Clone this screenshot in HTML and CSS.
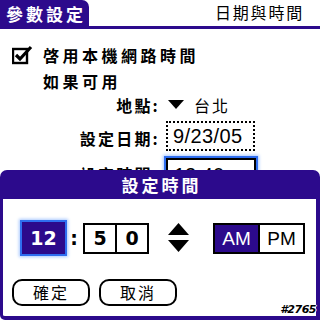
FILE: index.html
```html
<!DOCTYPE html>
<html>
<head>
<meta charset="utf-8">
<link rel="stylesheet" href="styles.css">
</head>
<body>
<div class="screen">
  <div class="titlebar">
    <div class="tab">參數設定</div>
    <div class="title-right">日期與時間</div>
  </div>
  <div class="content">
    <div class="check-row">
      <svg class="checkbox" width="21" height="20" viewBox="0 0 21 20">
        <rect x="1" y="4" width="14" height="14" fill="none" stroke="#000" stroke-width="2.4"/>
        <path d="M4 10 L8 14 L19 2" fill="none" stroke="#000" stroke-width="3.2"/>
      </svg>
      <span class="bold-label">啓用本機網路時間</span>
    </div>
    <div class="sub-label">如果可用</div>
    <div class="form">
      <div class="frow loc-row">
        <div class="flabel">地點:</div>
        <div class="fvalue loc">
          <svg width="17" height="10" viewBox="0 0 17 10"><path d="M0 0 H16 L8 9 Z" fill="#000"/></svg>
          <span class="city">台北</span>
        </div>
      </div>
      <div class="frow date-row">
        <div class="flabel">設定日期:</div>
        <div class="fvalue"><div class="datebox">9/23/05</div></div>
      </div>
      <div class="frow time-row-main">
        <div class="flabel">設定時間:</div>
        <div class="fvalue"><div class="timebox">12:40</div></div>
      </div>
    </div>
  </div>

  <div class="dialog">
    <div class="dhead">設定時間</div>
    <div class="dbody">
      <div class="time-row">
        <div class="hour">12</div>
        <div class="colon">:</div>
        <div class="minutes"><div class="mcell">5</div><div class="mcell">0</div></div>
        <svg class="arrows" width="21" height="30" viewBox="0 0 21 30">
          <path d="M10.5 0 L21 12 H0 Z" fill="#000"/>
          <path d="M0 17 H21 L10.5 29 Z" fill="#000"/>
        </svg>
        <div class="ampm"><div class="am">AM</div><div class="pm">PM</div></div>
      </div>
      <div class="btn-row">
        <div class="btn">確定</div>
        <div class="btn">取消</div>
      </div>
    </div>
    <div class="serial">#2765</div>
  </div>
</div>
</body>
</html>
```
FILE: styles.css
```css
html, body {
  margin: 0;
  padding: 0;
  background: #fff;
}
body {
  width: 320px;
  height: 320px;
  overflow: hidden;
  font-family: "Noto Sans CJK TC", "Noto Sans", sans-serif;
  color: #000;
}
.screen {
  position: relative;
  width: 320px;
  height: 320px;
}
.titlebar {
  display: flex;
  justify-content: space-between;
  align-items: flex-end;
  height: 26px;
  border-bottom: 3px solid #2c0a8c;
}
.tab {
  width: 83px;
  height: 26px;
  padding-left: 6px;
  background: #2c0a8c;
  color: #fff;
  border-top-right-radius: 7px;
  font-size: 17px;
  font-weight: bold;
  letter-spacing: 3px;
  line-height: 27px;
}
.title-right {
  font-size: 16px;
  letter-spacing: 1.8px;
  line-height: 16px;
  margin-right: 16px;
  margin-bottom: 6px;
}
.content {
  padding-top: 16px;
}
.check-row {
  display: flex;
  align-items: center;
  padding-left: 12px;
  gap: 10px;
  height: 20px;
}
.bold-label, .sub-label, .flabel {
  font-size: 16px;
  font-weight: bold;
  letter-spacing: 3.5px;
  line-height: 18px;
}
.sub-label {
  margin-top: 7px;
  padding-left: 43px;
}
.form {
  display: flex;
  flex-direction: column;
  margin-top: 4px;
}
.frow {
  display: flex;
  column-gap: 8px;
}
.flabel {
  width: 160px;
  text-align: right;
  letter-spacing: 2.2px;
  margin-right: -2px;
  flex: none;
}
.fvalue {
  display: flex;
  align-items: center;
}
.loc-row {
  height: 22px;
  align-items: center;
}
.loc {
  gap: 9px;
  padding-left: 2px;
}
.city {
  font-size: 16px;
  letter-spacing: 2px;
}
.date-row {
  height: 40px;
  align-items: flex-start;
}
.date-row .flabel {
  margin-top: 13px;
}
.date-row .fvalue {
  margin-top: 5px;
}
.datebox {
  width: 80px;
  height: 26px;
  border: 2px dotted #000;
  font-family: "Liberation Sans", sans-serif;
  font-size: 20px;
  line-height: 27px;
  padding-left: 5px;
  letter-spacing: 0.4px;
}
.time-row-main {
  align-items: flex-start;
}
.time-row-main .flabel {
  margin-top: 9px;
}
.time-row-main .fvalue {
  margin-top: 2px;
}
.timebox {
  width: 80px;
  height: 26px;
  border: 2px solid #000;
  box-shadow: 0 0 0 2px #2f6ef0, 0 0 3px 3px #a8c8ff;
  font-family: "Liberation Sans", sans-serif;
  font-size: 20px;
  line-height: 30px;
  padding-left: 6px;
}
.dialog {
  position: absolute;
  left: 0;
  top: 170px;
  width: 320px;
  height: 150px;
  display: flex;
  flex-direction: column;
}
.dhead {
  height: 29px;
  background: #2c0a8c;
  color: #fff;
  border-radius: 7px 7px 0 0;
  text-align: center;
  font-size: 17px;
  font-weight: bold;
  letter-spacing: 3px;
  text-indent: 3px;
  line-height: 30px;
}
.dbody {
  flex: 1;
  background: #fff;
  border: solid #2c0a8c;
  border-width: 0 4px 4px 3px;
  border-bottom-left-radius: 5px;
  padding: 23px 0 0 19px;
}
.time-row {
  display: flex;
  align-items: center;
  height: 32px;
}
.hour {
  width: 43px;
  height: 32px;
  background: #2c0a8c;
  color: #fff;
  font-family: "DejaVu Sans", sans-serif;
  font-weight: bold;
  font-size: 19px;
  line-height: 32px;
  text-align: center;
  box-shadow: 0 0 0 2px #2f6ef0, 0 0 3px 3px #a8c8ff;
}
.colon {
  width: 18px;
  text-align: center;
  font-family: "DejaVu Sans", sans-serif;
  font-weight: bold;
  font-size: 19px;
  line-height: 32px;
}
.minutes {
  display: flex;
  border: 2px solid #000;
  height: 27px;
}
.mcell {
  width: 30px;
  text-align: center;
  font-family: "DejaVu Sans", sans-serif;
  font-weight: bold;
  font-size: 19px;
  line-height: 27px;
}
.mcell + .mcell {
  border-left: 2px solid #000;
}
.arrows {
  margin-left: 19px;
}
.ampm {
  margin-left: 24px;
  display: flex;
  border: 2px solid #000;
  height: 27px;
}
.am, .pm {
  width: 43px;
  text-align: center;
  font-family: "Liberation Sans", sans-serif;
  font-size: 19px;
  line-height: 27px;
}
.am {
  background: #2c0a8c;
  color: #fff;
}
.pm {
  border-left: 2px solid #000;
}
.btn-row {
  display: flex;
  gap: 9px;
  margin-top: 25px;
  margin-left: -10px;
}
.btn {
  width: 74px;
  height: 23px;
  border: 2px solid #000;
  border-radius: 10px;
  text-align: center;
  font-size: 16px;
  letter-spacing: 2px;
  line-height: 23px;
}
.serial {
  position: absolute;
  right: 4px;
  bottom: 4px;
  font-family: "DejaVu Sans", sans-serif;
  font-size: 11px;
  font-weight: bold;
  font-style: italic;
  letter-spacing: -0.5px;
  color: #000;
  text-shadow: 1px 0 0 #fff, -1px 0 0 #fff, 0 1px 0 #fff, 0 -1px 0 #fff;
}
```
